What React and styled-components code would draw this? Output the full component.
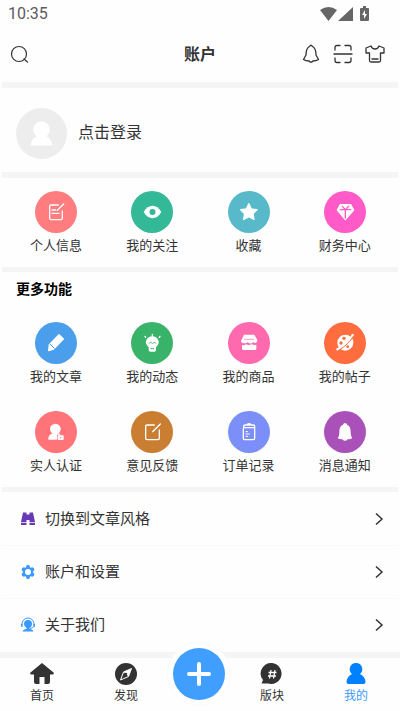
import styled, { createGlobalStyle } from "styled-components";

const GlobalStyle = createGlobalStyle`
  * {
    box-sizing: border-box;
  }

  body {
    margin: 0;
    background: #fefefe;
    color: #333333;
    font-family: "Noto Sans CJK SC", "Noto Sans", sans-serif;
  }

  button {
    margin: 0;
    padding: 0;
    border: 0;
    background: none;
    color: inherit;
    font: inherit;
    cursor: pointer;
  }

  a {
    color: inherit;
    text-decoration: none;
  }

  svg {
    display: block;
    flex: none;
  }
`;

const Page = styled.div`
  min-height: 100vh;
  display: flex;
  flex-direction: column;
`;

const StatusBar = styled.div`
  height: 28px;
  padding: 0 30px 0 8px;
  display: flex;
  align-items: center;
  justify-content: space-between;
  color: #5c5c5c;
  font: 400 16px/28px Roboto, sans-serif;
`;

const Header = styled.header`
  height: 54px;
  padding: 0 10px 2px;
  display: grid;
  grid-template-columns: 1fr auto 1fr;
  align-items: center;

  > h1 {
    margin: 0;
    padding-bottom: 2px;
    font-size: 16px;
    line-height: 24px;
    font-weight: 700;
  }
`;

const HeaderActions = styled.div`
  padding-right: 5px;
  display: flex;
  justify-content: flex-end;
  gap: 12px;
`;

const IconButton = styled.button`
  width: 20px;
  height: 20px;
`;

const Section = styled.section`
  margin: 0 2px;
  border-top: ${(props) => props.$gap || 6}px solid #f5f5f5;
`;

const Profile = styled.button`
  width: 100%;
  height: 84px;
  padding: 6px 14px 0;
  display: flex;
  align-items: center;
  gap: 11px;
  font-size: 16px;
  line-height: 24px;

  > span:last-child {
    padding-bottom: 4px;
  }
`;

const Avatar = styled.span`
  width: 51px;
  height: 51px;
  border-radius: 50%;
  background: #ededed;
`;

const SectionTitle = styled.h2`
  margin: 0;
  padding: 4px 14px 0;
  font-size: 14px;
  line-height: 24px;
  font-weight: 700;
  color: #000000;
`;

const ShortcutGrid = styled.div`
  padding: ${(props) => (props.$compact ? 13 : 22)}px 5px 12px 6px;
  display: grid;
  grid-template-columns: repeat(4, 1fr);
  row-gap: 25px;
`;

const ShortcutButton = styled.button`
  display: flex;
  flex-direction: column;
  align-items: center;
  gap: 2px;
  font-size: 13px;
  line-height: 20px;
`;

const Disc = styled.span`
  width: 42px;
  height: 42px;
  border-radius: 50%;
  color: ${(props) => props.$color};
  background: ${(props) => props.$color};
`;

const SettingsRow = styled.button`
  width: 100%;
  height: 53px;
  padding: 0 14px 0 18px;
  display: flex;
  align-items: center;
  gap: 9px;
  font-size: 15px;
  line-height: 24px;
  text-align: left;

  & + & {
    border-top: 1px solid #f9f9f9;
  }

  > span {
    flex: 1;
    padding-bottom: 2px;
  }
`;

const TabBar = styled.nav`
  height: 59px;
  margin-top: auto;
  padding: 0 2px 0 0;
  display: flex;
  border-top: 6px solid #f5f5f5;
  background: #fefefe;
`;

const Tab = styled.a`
  flex: 1;
  padding-top: 4px;
  display: flex;
  flex-direction: column;
  align-items: center;
  color: ${(props) => (props.$active ? "#3b9aff" : "#333333")};
  font-size: 12px;
  line-height: 17px;
`;

const AddSlot = styled.div`
  width: 62px;
  position: relative;
`;

const AddButton = styled.button`
  position: absolute;
  left: -1px;
  top: -16px;
  width: 64px;
  height: 64px;
  padding: 5px;
  border: 1px solid #fafafa;
  border-radius: 50%;
  background: #ffffff;
`;

// All shortcut glyphs are drawn on a 126 unit square, stroke 4 is a thin line
const Glyph = ({ children }) => (
  <svg
    width="42"
    height="42"
    viewBox="0 0 126 126"
    fill="none"
    stroke="#ffffff"
    strokeWidth="4"
    strokeLinecap="round"
    strokeLinejoin="round"
    aria-hidden="true"
  >
    {children}
  </svg>
);

const glyphs = {
  form: (
    <>
      <path d="M70 42H48q-4 0-4 4v36q0 4 4 4h30q4 0 4-4V60M86 39 67 58M51 57h11M51 67h21" />
    </>
  ),
  eye: (
    <>
      <path
        d="M38 63C52 38 77 38 91 63C77 88 52 88 38 63Z"
        fill="#fff"
        stroke="none"
      />
      <circle cx="64.500" cy="63" r="9" fill="currentColor" stroke="none" />
    </>
  ),
  star: (
    <path
      d="m62.500 38 7.500 16 17 2-12 12 3 17-15.500-8-15.500 8 3-17-12-12 17-2Z"
      fill="#fff"
    />
  ),
  diamond: (
    <>
      <path d="M49 41h31l9 16-25 29-24-29Z" fill="#fff" />
      <path d="M49 56h31M64 56v25M55 46l9 10 10-10" stroke="currentColor" />
    </>
  ),
  pencil: (
    <>
      <path d="m72 38 13 13-29 30-13-13Z" fill="#fff" />
      <path d="m43 69 12 12-14 5Z" fill="#fff" />
      <path d="m45 66 13 13" stroke="currentColor" strokeWidth="3" />
    </>
  ),
  bulb: (
    <>
      <path
        d="M53 76C36 61 48 43 64 43s28 18 11 33v8q0 5-5 5H58q-5 0-5-5Z"
        fill="#fff"
        stroke="none"
      />
      <path d="m42 43 2 3M64 37v5M87 43l-2 3" />
      <path
        d="m55 64 4-4 4 4M66 64l4-4 4 4M60 80h8"
        stroke="currentColor"
        strokeWidth="3"
      />
    </>
  ),
  shop: (
    <>
      <path
        d="M48 38h31l9 16c0 9-8 11-12 6-5 6-12 6-16 0-5 6-21 6-21-4Z"
        fill="#fff"
        stroke="none"
      />
      <path
        d="M42 68q8 4 12-2 9 6 17 0 5 5 14 2v12q0 4-4 4H46q-4 0-4-4Z"
        fill="#fff"
        stroke="none"
      />
      <path d="M50 52h27" stroke="currentColor" strokeWidth="2" />
    </>
  ),
  planet: (
    <>
      <circle cx="64" cy="62" r="24" fill="#fff" stroke="none" />
      <path d="M86 39C82 50 54 77 40 82" strokeWidth="7" />
      <path d="M87 44C79 58 63 74 47 83" stroke="currentColor" strokeWidth="3" />
      <g fill="currentColor" stroke="none">
        <circle cx="60" cy="49" r="5" />
        <circle cx="51" cy="63" r="5" />
        <circle cx="71" cy="74" r="4" />
      </g>
    </>
  ),
  verified: (
    <>
      <circle cx="61" cy="54" r="16" fill="#fff" stroke="none" />
      <path
        d="M40 86c0-12 5-17 15-20h14c4 1 7 3 9 5H66v15Z"
        fill="#fff"
        stroke="none"
      />
      <rect x="68" y="73" width="18" height="14" rx="2" fill="#fff" stroke="none" />
      <circle cx="77" cy="80" r="2" fill="currentColor" stroke="none" />
    </>
  ),
  compose: (
    <path d="M70 42H48q-4 0-4 4v36q0 4 4 4h33q4 0 4-4V57M88 39 65 62" />
  ),
  order: (
    <>
      <path d="M50 50q-4 0-4 4v28q0 4 4 4h26q4 0 4-4V54q0-4-4-4ZM47 50v-4q0-4 4-4h25q4 0 4 4v4M58 40q5-4 10 0" />
      <path d="M54 62h5M54 69h10M54 76h5" strokeWidth="3" />
    </>
  ),
  bell: (
    <path
      d="M63 36q5 0 6 5c8 3 11 10 11 22 0 9 2 14 5 18-4 3-9 4-14 4-5 6-11 6-16 0-5 0-10-1-14-4 4-4 5-9 5-18 0-12 3-19 11-22q1-5 6-5Z"
      fill="#fff"
      stroke="none"
    />
  ),
};

const account = [
  { label: "个人信息", color: "#ff7c7f", icon: "form" },
  { label: "我的关注", color: "#33b998", icon: "eye" },
  { label: "收藏", color: "#58b9cb", icon: "star" },
  { label: "财务中心", color: "#ff5ac8", icon: "diamond" },
];

const features = [
  { label: "我的文章", color: "#4b9eeb", icon: "pencil" },
  { label: "我的动态", color: "#3ab36a", icon: "bulb" },
  { label: "我的商品", color: "#ff69ad", icon: "shop" },
  { label: "我的帖子", color: "#ff6c3e", icon: "planet" },
  { label: "实人认证", color: "#ff7479", icon: "verified" },
  { label: "意见反馈", color: "#c97e31", icon: "compose" },
  { label: "订单记录", color: "#7c8ff9", icon: "order" },
  { label: "消息通知", color: "#aa50b9", icon: "bell" },
];

const SearchIcon = () => (
  <svg width="20" height="20" fill="none" stroke="#333" strokeWidth="1.200">
    <circle cx="9" cy="10" r="7.500" />
    <path d="m14 15 3.500 3" strokeLinecap="round" />
  </svg>
);

const LineIcon = ({ d }) => (
  <svg
    width="20"
    height="20"
    fill="none"
    stroke="#333"
    strokeWidth="1.300"
    strokeLinecap="round"
    strokeLinejoin="round"
  >
    <path d={d} />
  </svg>
);

const actions = [
  {
    label: "通知",
    d: "M8.500 2.500C5.500 4 5 7 5 11L2.500 15.500Q5 17 8 17Q10 19.500 12 17Q15 17 17.500 15.500L15 11C15 7 14.500 4 11.500 2.500M8.500 2.500Q10 0 11.500 2.500",
  },
  {
    label: "扫一扫",
    d: "M1 10H19M2 6V3.500Q2 1.500 4 1.500H7M12 1.500H16Q18 1.500 18 3.500V6M2 14V16.500Q2 18.500 4 18.500H7M12 18.500H16Q18 18.500 18 16.500V14",
  },
  {
    label: "换肤",
    d: "M6 2 1 4V9H4.500V16.500Q4.500 18 6 18H14Q15.500 18 15.500 16.500V9H19V4L14 2Q13 5 10 5Q7 5 6 2M7 15H13",
  },
];

const StatusIcons = () => (
  <svg width="50" height="16" fill="#666666" aria-hidden="true">
    <path d="M0 4Q8.500-2 17 4L8.500 15ZM18 15 33 1V15Z" />
    <path
      fillRule="evenodd"
      d="M40 3Q40 2 41 2H43V0H46V2H48Q49 2 49 3V14Q49 15 48 15H41Q40 15 40 14ZM45 4 42 9H44V13L47 8H45Z"
    />
  </svg>
);

const Person = ({ size, color }) => (
  <svg width={size} height={size} viewBox="0 0 24 24" fill={color}>
    <path d="M12 1a6.200 6.200 0 0 1 4 11c3.500 1.500 5.500 5 5.500 8q0 2-2 2h-15q-2 0-2-2c0-3 2-6.500 5.500-8a6.200 6.200 0 0 1 4-11Z" />
  </svg>
);

const Binoculars = () => (
  <svg width="16" height="16" fill="#6739b6">
    <path d="M3 1.500h3.500V3.500h3V1.500H13L15 11H9.500V9h-3v2H1ZM1 11.700h5.500v2.300H1ZM9.500 11.700H15v2.300H9.500Z" />
  </svg>
);

const Gear = () => (
  <svg width="16" height="16" fill="#3b9aff">
    <path
      fillRule="evenodd"
      d="m6.500 1.500 1.500-.8 1.500.8.700 2.200 2.300-.4 1.500 1 .3 1.700L12.800 8l1.500 2-.3 1.700-1.500 1-2.300-.4-.7 2.200-1.500.8-1.500-.8-.7-2.200-2.300.4-1.500-1L1.700 10l1.500-2-1.500-2L2 4.300l1.500-1 2.300.4ZM8 5a3 3 0 1 0 0 6 3 3 0 0 0 0-6Z"
    />
  </svg>
);

const Support = () => (
  <svg width="16" height="16" fill="#3b9aff">
    <path d="M2 8V7a6 6 0 0 1 12 0v2Q13 11.500 10 11.500" fill="none" stroke="#3b9aff" />
    <path d="M1 7h1.500v3H2Q1 10 1 9ZM13.500 7H15v2q0 1-1 1h-.5ZM4 7A4 4 0 0 1 12 7C12 9.500 10.500 10.500 9.500 11V12Q13 12.500 13.500 14.500H2.500Q3 12.500 6.500 12V11Q4 9.500 4 7Z" />
  </svg>
);

const settings = [
  { label: "切换到文章风格", icon: <Binoculars /> },
  { label: "账户和设置", icon: <Gear /> },
  { label: "关于我们", icon: <Support /> },
];

const Shortcut = ({ item }) => (
  <ShortcutButton type="button">
    <Disc $color={item.color}>
      <Glyph>{glyphs[item.icon]}</Glyph>
    </Disc>
    {item.label}
  </ShortcutButton>
);

const App = () => {
  return (
    <Page>
      <GlobalStyle />
      <StatusBar>
        <span>10:35</span>
        <StatusIcons />
      </StatusBar>

      <Header>
        <IconButton type="button" aria-label="搜索">
          <SearchIcon />
        </IconButton>
        <h1>账户</h1>
        <HeaderActions>
          {actions.map((action) => (
            <IconButton key={action.label} type="button" aria-label={action.label}>
              <LineIcon d={action.d} />
            </IconButton>
          ))}
        </HeaderActions>
      </Header>

      <Section>
        <Profile type="button">
          <Avatar>
            <svg width="51" height="51" fill="#ffffff">
              <path d="M25.500 13.500a8.200 8.200 0 0 1 5 14.700c3.500 1.800 5.500 5 6 9.300h-22c.5-4.300 2.500-7.500 6-9.300a8.200 8.200 0 0 1 5-14.700Z" />
            </svg>
          </Avatar>
          <span>点击登录</span>
        </Profile>
      </Section>

      <Section>
        <ShortcutGrid $compact>
          {account.map((item) => (
            <Shortcut key={item.label} item={item} />
          ))}
        </ShortcutGrid>
      </Section>

      <Section $gap={5}>
        <SectionTitle>更多功能</SectionTitle>
        <ShortcutGrid>
          {features.map((item) => (
            <Shortcut key={item.label} item={item} />
          ))}
        </ShortcutGrid>
      </Section>

      <Section $gap={5}>
        {settings.map((item) => (
          <SettingsRow key={item.label} type="button">
            {item.icon}
            <span>{item.label}</span>
            <svg width="10" height="14" fill="none" stroke="#333" strokeWidth="1.500">
              <path d="m2 1.500 6 5.500-6 5.500" />
            </svg>
          </SettingsRow>
        ))}
      </Section>

      <TabBar>
        <Tab href="#home">
          <svg width="24" height="24" fill="#333333">
            <path d="m12 1 11.500 9.500q1 2-1 2H20V20q0 2-2 2h-3.500v-7h-5v7H6q-2 0-2-2v-7.500H1.500q-2 0-1-2Z" />
          </svg>
          首页
        </Tab>
        <Tab href="#discover">
          <svg width="24" height="24" fill="#333333">
            <circle cx="12" cy="12" r="11" />
            <path d="m17.500 6.500-3 8-8 3.500 3-8Z" fill="none" stroke="#fff" />
            <path d="m17.500 6.500-3 8-5-4.500Z" fill="#fff" />
            <circle cx="12" cy="12" r="1.200" />
          </svg>
          发现
        </Tab>
        <AddSlot>
          <AddButton type="button" aria-label="发布">
            <svg width="52" height="52">
              <circle cx="26" cy="26" r="26" fill="#409eff" />
              <path d="M26 16v20M16 26h20" stroke="#fff" strokeWidth="4" strokeLinecap="round" />
            </svg>
          </AddButton>
        </AddSlot>
        <Tab href="#boards">
          <svg width="24" height="24" fill="#333333">
            <path d="M12 1a10.500 10.500 0 1 1-4 20.500H1.500L3 18A10.500 10.500 0 0 1 12 1Z" />
            <path
              d="m11 8-1.500 8.500M15 8l-1.500 8.500M8.500 10.500h8M8 14h8"
              stroke="#fff"
              strokeWidth="1.300"
            />
          </svg>
          版块
        </Tab>
        <Tab href="#mine" $active>
          <Person size={24} color="#0081ff" />
          我的
        </Tab>
      </TabBar>
    </Page>
  );
};

export default App;
